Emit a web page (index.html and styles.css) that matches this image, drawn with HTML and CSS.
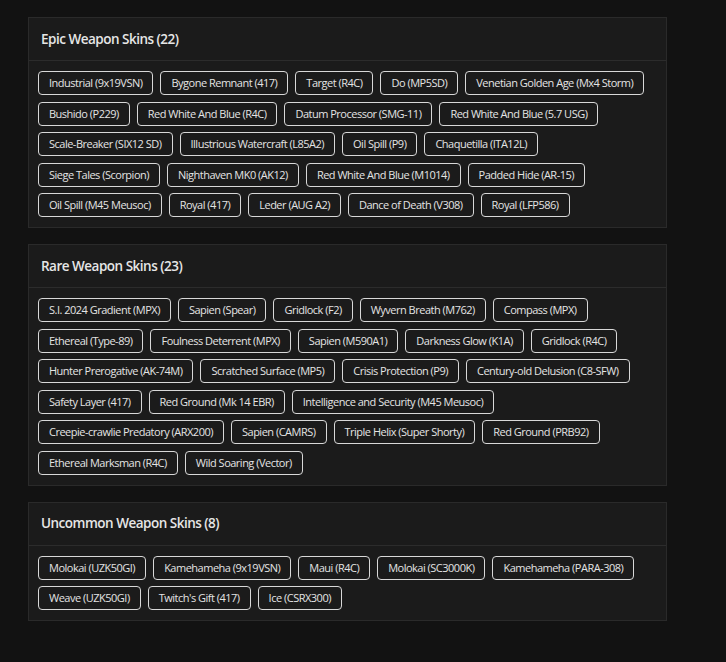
FILE: index.html
```html
<!DOCTYPE html>
<html lang="en">
<head>
    <meta charset="UTF-8">
    <meta name="viewport" content="width=device-width, initial-scale=1.0">
    <title>Weapon Skins</title>
    <link rel="stylesheet" href="styles.css">
</head>
<body>

  <div class="page">

    <!-- Epic -->
    <div class="skinCard">
      <div class="skinHeader">Epic Weapon Skins (22)</div>
      <div class="skinList">
        <span class="chip">Industrial (9x19VSN)</span>
        <span class="chip">Bygone Remnant (417)</span>
        <span class="chip">Target (R4C)</span>
        <span class="chip">Do (MP5SD)</span>
        <span class="chip">Venetian Golden Age (Mx4 Storm)</span>
        <span class="chip">Bushido (P229)</span>
        <span class="chip">Red White And Blue (R4C)</span>
        <span class="chip">Datum Processor (SMG-11)</span>
        <span class="chip">Red White And Blue (5.7 USG)</span>
        <span class="chip">Scale-Breaker (SIX12 SD)</span>
        <span class="chip">Illustrious Watercraft (L85A2)</span>
        <span class="chip">Oil Spill (P9)</span>
        <span class="chip">Chaquetilla (ITA12L)</span>
        <span class="chip">Siege Tales (Scorpion)</span>
        <span class="chip">Nighthaven MK0 (AK12)</span>
        <span class="chip">Red White And Blue (M1014)</span>
        <span class="chip">Padded Hide (AR-15)</span>
        <span class="chip">Oil Spill (M45 Meusoc)</span>
        <span class="chip">Royal (417)</span>
        <span class="chip">Leder (AUG A2)</span>
        <span class="chip">Dance of Death (V308)</span>
        <span class="chip">Royal (LFP586)</span>
      </div>
    </div>

    <!-- Rare -->
    <div class="skinCard">
      <div class="skinHeader">Rare Weapon Skins (23)</div>
      <div class="skinList">
        <span class="chip">S.I. 2024 Gradient (MPX)</span>
        <span class="chip">Sapien (Spear)</span>
        <span class="chip">Gridlock (F2)</span>
        <span class="chip">Wyvern Breath (M762)</span>
        <span class="chip">Compass (MPX)</span>
        <span class="chip">Ethereal (Type-89)</span>
        <span class="chip">Foulness Deterrent (MPX)</span>
        <span class="chip">Sapien (M590A1)</span>
        <span class="chip">Darkness Glow (K1A)</span>
        <span class="chip">Gridlock (R4C)</span>
        <span class="chip">Hunter Prerogative (AK-74M)</span>
        <span class="chip">Scratched Surface (MP5)</span>
        <span class="chip">Crisis Protection (P9)</span>
        <span class="chip">Century-old Delusion (C8-SFW)</span>
        <span class="chip">Safety Layer (417)</span>
        <span class="chip">Red Ground (Mk 14 EBR)</span>
        <span class="chip">Intelligence and Security (M45 Meusoc)</span>
        <span class="chip">Creepie-crawlie Predatory (ARX200)</span>
        <span class="chip">Sapien (CAMRS)</span>
        <span class="chip">Triple Helix (Super Shorty)</span>
        <span class="chip">Red Ground (PRB92)</span>
        <span class="chip">Ethereal Marksman (R4C)</span>
        <span class="chip">Wild Soaring (Vector)</span>
      </div>
    </div>

    <!-- Uncommon -->
    <div class="skinCard">
      <div class="skinHeader">Uncommon Weapon Skins (8)</div>
      <div class="skinList">
        <span class="chip">Molokai (UZK50GI)</span>
        <span class="chip">Kamehameha (9x19VSN)</span>
        <span class="chip">Maui (R4C)</span>
        <span class="chip">Molokai (SC3000K)</span>
        <span class="chip">Kamehameha (PARA-308)</span>
        <span class="chip">Weave (UZK50GI)</span>
        <span class="chip">Twitch's Gift (417)</span>
        <span class="chip">Ice (CSRX300)</span>
      </div>
    </div>

  </div>

</body>
</html>
```

FILE: styles.css
```css
body {
  margin: 0;
  background-color: #121212;
  color: #e2e2e2;
  font-family: "Open Sans", "Liberation Sans", sans-serif;
}

.page {
  padding: 17px 28px;
  display: flex;
  flex-direction: column;
  gap: 16px;
}

.skinCard {
  width: 639px;
  box-sizing: border-box;
  background-color: #1b1b1b;
  border: 1px solid #2a2a2a;
}

.skinHeader {
  height: 43px;
  box-sizing: border-box;
  padding: 0 12px 1px 12px;
  display: flex;
  align-items: center;
  font-size: 13.5px;
  font-weight: 600;
  letter-spacing: -0.5px;
  color: #e6e6e6;
  border-bottom: 1px solid #2c2c2c;
}

.skinList {
  padding: 10px 9px 10px 9px;
  display: flex;
  flex-wrap: wrap;
  gap: 6.5px 7px;
}

.chip {
  border: 1px solid #d8d8d8;
  border-radius: 4px;
  padding: 4px 10px;
  font-size: 11px;
  line-height: 14px;
  letter-spacing: -0.5px;
  color: #e4e4e4;
  white-space: nowrap;
}
```
